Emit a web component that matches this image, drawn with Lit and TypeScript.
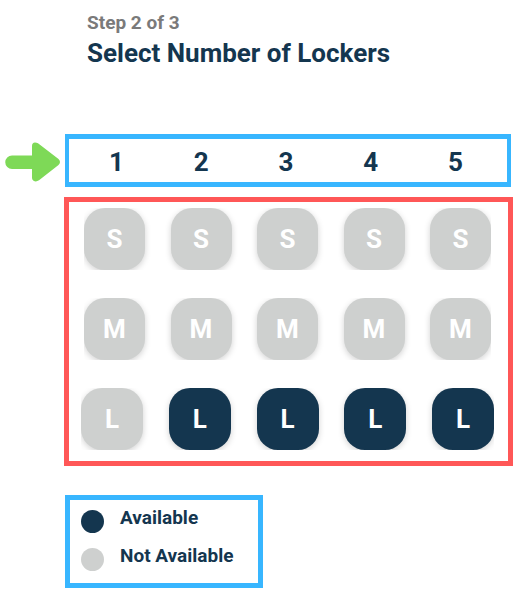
import { LitElement, html, css } from "lit";
import { customElement } from "lit/decorators.js";
import { classMap } from "lit/directives/class-map.js";

interface LockerRow {
  size: string;
  label: string;
  available: boolean[];
}

const COUNTS = [1, 2, 3, 4, 5];

const ROWS: LockerRow[] = [
  { size: "S", label: "Small", available: [false, false, false, false, false] },
  { size: "M", label: "Medium", available: [false, false, false, false, false] },
  { size: "L", label: "Large", available: [false, true, true, true, true] },
];

@customElement("app-root")
export class AppRoot extends LitElement {
  static styles = css`
    :host {
      display: block;
      box-sizing: border-box;
      min-height: 100vh;
      padding: 12px 9px 12px 0;
      background: #fff;
      color: #14364f;
      font-family: Roboto, "Liberation Sans", sans-serif;
      font-weight: 700;
    }
    *,
    *::before {
      box-sizing: border-box;
    }
    header {
      padding-left: 87px;
    }
    .step {
      margin: 0;
      font-size: 19px;
      line-height: 22px;
      color: #7a7a7a;
    }
    h1 {
      margin: 0;
      font-size: 26px;
      line-height: 38px;
    }
    .picker {
      display: grid;
      grid-template-columns: 64px 1fr;
      row-gap: 10px;
      margin-top: 62px;
    }
    .pointer {
      align-self: center;
      justify-self: end;
      display: block;
      width: 56px;
      height: 40px;
      margin: 3px 3px 0 0;
    }
    .counts {
      display: flex;
      justify-content: space-between;
      align-items: center;
      height: 53px;
      margin: 0 2px 0 1px;
      padding: 3px 44px 0 40px;
      border: 5px solid #38b6ff;
      border-width: 5px 4px;
      font-size: 26px;
      line-height: 32px;
    }
    .sizes {
      grid-column: 2;
      display: flex;
      flex-direction: column;
      gap: 28px;
      padding: 6px 14px 11px 12px;
      border: 5px solid #ff5757;
    }
    .row {
      display: flex;
      justify-content: space-between;
      overflow: hidden;
      margin: 0 3px;
    }
    .row.large {
      margin: 0;
    }
    .locker {
      width: 61px;
      height: 62px;
      padding: 0;
      border: 0;
      border-radius: 21px;
      background: #ced0cf;
      color: #fff;
      box-shadow: 0 2px 6px rgba(0, 0, 0, 0.18);
      font: inherit;
      font-size: 26px;
      line-height: 32px;
      text-align: center;
    }
    .large .locker {
      width: 62px;
    }
    .locker.available {
      background: #14364f;
      cursor: pointer;
    }
    .legend {
      display: flex;
      flex-direction: column;
      gap: 14px;
      width: 198px;
      margin: 29px 0 0 65px;
      padding: 6px 11px 15px;
      border: 5px solid #38b6ff;
      list-style: none;
      font-size: 19px;
      line-height: 24px;
    }
    .legend li {
      display: flex;
      align-items: flex-start;
      gap: 16px;
      white-space: nowrap;
    }
    .dot {
      width: 23px;
      height: 23px;
      margin-top: 4px;
      margin-bottom: -3px;
      border-radius: 50%;
      background: #ced0cf;
    }
    .dot.available {
      background: #14364f;
    }
  `;

  render() {
    return html`
      <header>
        <p class="step">Step 2 of 3</p>
        <h1>Select Number of Lockers</h1>
      </header>
      <main>
        <section class="picker">
          <svg class="pointer" viewBox="0 0 56 40" aria-hidden="true">
            <path
              fill="#7ed957"
              d="M7 13.5H27V4Q27 0.8 30 0.5Q31.500 0.500 33 1.200L53.500 17Q56.500 20 53.500 23L34 38.300Q31 40.300 28.500 38.700Q27 37.700 27 36V27H7A6.750 6.750 0 0 1 7 13.500Z"
            />
          </svg>
          <div class="counts">${COUNTS.map((n) => html`<span>${n}</span>`)}</div>
          <div class="sizes">
            ${ROWS.map(
              (row) => html`
                <div class=${classMap({ row: true, large: row.size === "L" })}>
                  ${row.available.map(
                    (free, i) => html`<button
                      type="button"
                      class=${classMap({ locker: true, available: free })}
                      aria-label="${row.label}, ${COUNTS[i]}"
                      ?disabled=${!free}
                    >
                      ${row.size}
                    </button>`
                  )}
                </div>
              `
            )}
          </div>
        </section>
        <ul class="legend">
          <li><span class="dot available"></span>Available</li>
          <li><span class="dot"></span>Not Available</li>
        </ul>
      </main>
    `;
  }
}
